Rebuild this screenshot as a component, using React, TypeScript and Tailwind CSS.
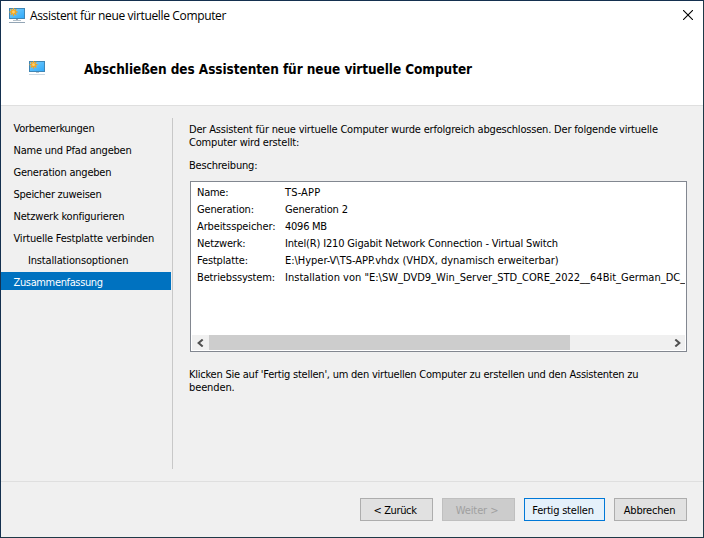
import React from "react";

const steps = [
  { label: "Vorbemerkungen", cls: "pl-[12.5px] tracking-[-0.28px]" },
  { label: "Name und Pfad angeben", cls: "pl-[12.5px] tracking-[-0.22px]" },
  { label: "Generation angeben", cls: "pl-[12.5px] tracking-[-0.22px]" },
  { label: "Speicher zuweisen", cls: "pl-[12.5px] tracking-[-0.26px]" },
  { label: "Netzwerk konfigurieren", cls: "pl-[12.5px] tracking-[-0.2px]" },
  { label: "Virtuelle Festplatte verbinden", cls: "pl-[12.5px] tracking-[-0.2px]" },
  { label: "Installationsoptionen", cls: "pl-[27px] tracking-[-0.16px]" },
  { label: "Zusammenfassung", cls: "pl-[12.5px] tracking-[-0.36px] bg-[#0072c0] text-white" },
];

const details = [
  { name: "Name:", value: "TS-APP", n: "tracking-[-0.25px]", v: "tracking-[0.15px]" },
  { name: "Generation:", value: "Generation 2", n: "tracking-[-0.15px]", v: "tracking-[-0.15px]" },
  { name: "Arbeitsspeicher:", value: "4096 MB", n: "tracking-[-0.12px]", v: "tracking-[-0.25px]" },
  { name: "Netzwerk:", value: "Intel(R) I210 Gigabit Network Connection - Virtual Switch", n: "tracking-[-0.15px]", v: "tracking-[-0.16px]" },
  { name: "Festplatte:", value: "E:\\Hyper-V\\TS-APP.vhdx (VHDX, dynamisch erweiterbar)", n: "tracking-[-0.15px]", v: "tracking-[-0.03px]" },
  { name: "Betriebssystem:", value: "Installation von \"E:\\SW_DVD9_Win_Server_STD_CORE_2022__64Bit_German_DC_", n: "tracking-[-0.15px]", v: "tracking-[0.01px]" },
];

function MonitorIcon({ small = false }: { small?: boolean }) {
  return (
    <svg width="16" height="16" viewBox="0 0 16 16" shapeRendering="crispEdges" className="shrink-0">
      <defs>
        <linearGradient id="screen" x1="0" y1="0" x2="1" y2="1">
          <stop offset="0" stopColor="#86d0fa" />
          <stop offset="0.5" stopColor="#55bcfb" />
          <stop offset="1" stopColor="#32aafa" />
        </linearGradient>
      </defs>
      <rect width="16" height="11" fill="#3f86b5" />
      <rect x="1" y="1" width="14" height="9" fill="url(#screen)" />
      {small ? (
        <rect x="7" y="11" width="3" height="1" fill="#b9c6d0" />
      ) : (
        <>
          <rect x="7" y="11" width="2" height="1" fill="#9aa8b4" />
          <rect x="4" y="12" width="8" height="1" fill="#b3c0ca" />
        </>
      )}
      <rect x="0" y={small ? 13 : 14} width="16" height="1" fill={small ? "#ccd8e2" : "#93a5b5"} />
      <g shapeRendering="auto" transform={small ? "translate(0 -0.3)" : undefined}>
        <path d="M4.5 0v8M0.5 4h8M1.7 1.2l5.6 5.6M7.3 1.2l-5.6 5.6" stroke="#f4a31c" strokeWidth="1.3" />
        <circle cx="4.5" cy="4" r="2.3" fill="#f5a623" />
        <circle cx="4.5" cy="4" r="1.4" fill="#ffd06a" />
      </g>
    </svg>
  );
}

function Button({ label, cls }: { label: string; cls: string }) {
  return (
    <button className={`h-[23px] border pt-px text-center leading-[21px] whitespace-nowrap ${cls}`}>{label}</button>
  );
}

export default function App() {
  return (
    <div className="flex h-[538px] w-[704px] flex-col overflow-hidden border border-t-[#14304f] border-r-[#1f3947] border-b-[#1f3947] border-l-[#14304f] bg-[#f0f0f0] font-['DejaVu_Sans_Condensed','DejaVu_Sans',sans-serif] text-[11px] text-black">
      <header className="h-[105px] shrink-0 border-b border-[#dfdfdf] bg-white">
        <div className="flex h-[30px] items-start pt-[7px] pl-2">
          <MonitorIcon />
          <h1 className="ml-[5px] font-['Open_Sans','Noto_Sans',sans-serif] text-[12px] leading-4 whitespace-nowrap tracking-[-0.35px]">
            Assistent für neue virtuelle Computer
          </h1>
          <svg width="10" height="10" viewBox="0 0 10 10" className="mt-[2px] mr-[10px] ml-auto">
            <path d="M0 0l10 10M10 0l-10 10" stroke="#000" strokeWidth="1.1" fill="none" />
          </svg>
        </div>
        <div className="flex items-start pt-[30px] pl-7">
          <MonitorIcon small />
          <h2 className="ml-[39px] text-[13.5px] leading-4 font-bold whitespace-nowrap tracking-[-0.07px]">
            Abschließen des Assistenten für neue virtuelle Computer
          </h2>
        </div>
      </header>

      <main className="flex h-[375px] shrink-0 pt-3">
        <nav className="flex w-[170px] shrink-0 flex-col gap-1">
          {steps.map((s) => (
            <div key={s.label} className={`h-[18px] leading-[22px] whitespace-nowrap ${s.cls}`}>
              {s.label}
            </div>
          ))}
        </nav>
        <div className="ml-px h-[351px] w-px shrink-0 bg-[#c8c8c8]" />
        <section className="flex flex-col pt-[5px] pl-4 leading-[13px]">
          <p className="whitespace-nowrap">
            <span className="block tracking-[-0.19px]">Der Assistent für neue virtuelle Computer wurde erfolgreich abgeschlossen. Der folgende virtuelle</span>
            <span className="block tracking-[-0.19px]">Computer wird erstellt:</span>
          </p>
          <p className="mt-[10px] tracking-[-0.2px]">Beschreibung:</p>
          <div className="mt-[9px] ml-px flex h-[171px] w-[497px] flex-col justify-between border border-[#828790] bg-white px-px pb-px">
            <dl className="overflow-hidden pt-[2px] pl-[5px] leading-[17px]">
              {details.map((d) => (
                <div key={d.name} className="flex whitespace-nowrap">
                  <dt className={`w-[88px] shrink-0 ${d.n}`}>{d.name}</dt>
                  <dd className={d.v}>{d.value}</dd>
                </div>
              ))}
            </dl>
            <div className="flex h-[15px] items-center bg-[#f0f0f0]">
              <div className="flex w-[17px] justify-center">
                <svg width="7" height="8" viewBox="0 0 7 8">
                  <path d="M5.7 0.5L1.6 4l4.1 3.5" stroke="#505050" strokeWidth="2" fill="none" />
                </svg>
              </div>
              <div className="h-full w-[361px] bg-[#cdcdcd]" />
              <svg width="7" height="8" viewBox="0 0 7 8" className="mr-[4px] ml-auto">
                <path d="M1.3 0.5L5.4 4 1.3 7.5" stroke="#505050" strokeWidth="2" fill="none" />
              </svg>
            </div>
          </div>
          <p className="mt-4 whitespace-nowrap">
            <span className="block tracking-[-0.23px]">Klicken Sie auf 'Fertig stellen', um den virtuellen Computer zu erstellen und den Assistenten zu</span>
            <span className="block tracking-[-0.12px]">beenden.</span>
          </p>
        </section>
      </main>

      <footer className="flex grow items-start justify-end gap-[9px] border-t border-[#dfdfdf] pt-4 pr-4">
        <Button label="< Zurück" cls="w-[73px] border-[#adadad] bg-[#e1e1e1] pr-[3px] tracking-[-0.35px]" />
        <Button label="Weiter >" cls="w-[73px] border-[#bfbfbf] bg-[#cccccc] pr-[3px] text-[#a0a0a0] tracking-[-0.1px]" />
        <Button label="Fertig stellen" cls="w-[81px] border-[#0078d7] bg-[#e5f1fb] pr-[3px] tracking-[-0.2px]" />
        <Button label="Abbrechen" cls="w-[73px] border-[#adadad] bg-[#e1e1e1] pr-[2px] tracking-[-0.2px]" />
      </footer>
    </div>
  );
}
